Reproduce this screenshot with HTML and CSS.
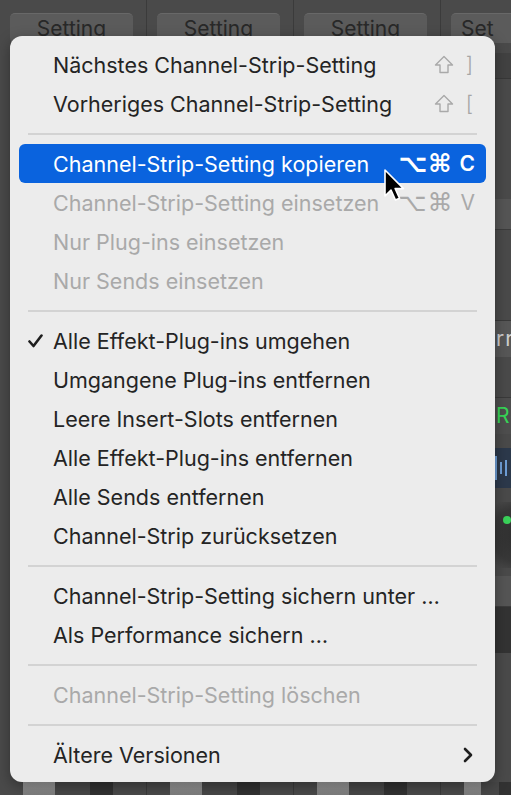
FILE: index.html
```html
<!DOCTYPE html>
<html>
<head>
	<meta charset="UTF-8" />
	<title>Channel-Strip-Menü</title>
	<link rel="stylesheet" href="styles.css">
</head>
<body>
	<div class="mixer">
		<div class="strip">
			<div class="setting-btn">Setting</div>
			<div class="fader-row"><span class="cap"></span><span class="slot"></span><span class="deep"></span></div>
		</div>
		<div class="strip">
			<div class="setting-btn">Setting</div>
			<div class="fader-row"><span class="cap"></span><span class="slot"></span><span class="deep"></span></div>
		</div>
		<div class="strip">
			<div class="setting-btn">Setting</div>
			<div class="fader-row"><span class="cap"></span><span class="slot"></span><span class="deep"></span></div>
		</div>
		<div class="strip last">
			<div class="setting-btn">Set</div>
			<div class="band dark"></div>
			<div class="band gap-a"></div>
			<div class="band mid"></div>
			<div class="band gap-b"></div>
			<div class="band slot-text">rr</div>
			<div class="band gap-c"></div>
			<div class="band slot-text green">Re</div>
			<div class="band gap-d"></div>
			<div class="band wave"><span></span><span></span><span></span><span></span></div>
			<div class="knob"><span class="led"></span></div>
			<div class="band mid"></div>
			<div class="band deep"></div>
			<div class="fader-row"><span class="cap"></span><span class="slot"></span><span class="deep"></span></div>
		</div>
	</div>

	<div class="menu">
		<div class="item"><span class="label">Nächstes Channel-Strip-Setting</span>
			<span class="keys dim"><svg class="shift" width="20" height="19" viewBox="0 0 20 19"><path d="M10 1.5 L18.5 10 L14 10 L14 17.5 L6 17.5 L6 10 L1.5 10 Z" fill="none" stroke="#a9a9a9" stroke-width="1.4" stroke-linejoin="round"/></svg>]</span>
		</div>
		<div class="item"><span class="label">Vorheriges Channel-Strip-Setting</span>
			<span class="keys dim"><svg class="shift" width="20" height="19" viewBox="0 0 20 19"><path d="M10 1.5 L18.5 10 L14 10 L14 17.5 L6 17.5 L6 10 L1.5 10 Z" fill="none" stroke="#a9a9a9" stroke-width="1.4" stroke-linejoin="round"/></svg>[</span>
		</div>
		<div class="sep"></div>
		<div class="item active"><span class="label">Channel-Strip-Setting kopieren</span><span class="keys"><span class="sym">⌥⌘</span>C</span></div>
		<div class="item off"><span class="label">Channel-Strip-Setting einsetzen</span><span class="keys"><span class="sym">⌥⌘</span>V</span></div>
		<div class="item off"><span class="label">Nur Plug-ins einsetzen</span></div>
		<div class="item off"><span class="label">Nur Sends einsetzen</span></div>
		<div class="sep"></div>
		<div class="item">
			<svg class="check" width="15" height="14" viewBox="0 0 15 14"><path d="M1.5 7.5 L5.5 12 L13.5 1.5" fill="none" stroke="#1e1e1e" stroke-width="2.6" stroke-linecap="round" stroke-linejoin="round"/></svg>
			<span class="label">Alle Effekt-Plug-ins umgehen</span>
		</div>
		<div class="item"><span class="label">Umgangene Plug-ins entfernen</span></div>
		<div class="item"><span class="label">Leere Insert-Slots entfernen</span></div>
		<div class="item"><span class="label">Alle Effekt-Plug-ins entfernen</span></div>
		<div class="item"><span class="label">Alle Sends entfernen</span></div>
		<div class="item"><span class="label">Channel-Strip zurücksetzen</span></div>
		<div class="sep"></div>
		<div class="item"><span class="label">Channel-Strip-Setting sichern unter …</span></div>
		<div class="item"><span class="label">Als Performance sichern …</span></div>
		<div class="sep"></div>
		<div class="item off"><span class="label">Channel-Strip-Setting löschen</span></div>
		<div class="sep"></div>
		<div class="item"><span class="label">Ältere Versionen</span>
			<svg class="chevron" width="12" height="16" viewBox="0 0 12 16"><path d="M3 2 L9 8 L3 14" fill="none" stroke="#1e1e1e" stroke-width="2.6" stroke-linecap="round" stroke-linejoin="round"/></svg>
		</div>
	</div>

	<svg class="cursor" width="28" height="36" viewBox="0 0 28 36">
		<path d="M2 1 L2 27 L8 21 L12.5 31 L16.5 29.3 L12.2 19.6 L20.5 19.6 Z" fill="#000" stroke="#fff" stroke-width="1.6" stroke-linejoin="round"/>
	</svg>
</body>
</html>
```

FILE: styles.css
```css
html, body{
	margin: 0;
	padding: 0;
}
body{
	width: 511px;
	height: 795px;
	overflow: hidden;
	position: relative;
	background-color: #4a4a4a;
	font-family: Inter, "Noto Sans", "Liberation Sans", sans-serif;
}

/* mixer behind the menu */
.mixer{
	display: flex;
	height: 795px;
}
.strip{
	width: 147px;
	flex: none;
	display: flex;
	flex-direction: column;
	border-right: 1px solid #3b3b3b;
	padding-top: 13px;
	box-sizing: border-box;
}
.strip.last{
	width: 70px;
	border-right: 0;
}
.setting-btn{
	margin-left: 10px;
	width: 123px;
	height: 30px;
	flex: none;
	box-sizing: border-box;
	border-radius: 5px;
	background: #5b5b5b;
	border-top: 1px solid #686868;
	color: #282828;
	font-size: 21px;
	text-align: center;
	line-height: 30px;
}
.strip.last .setting-btn{
	width: 90px;
	text-align: left;
	padding-left: 10px;
}
.band{
	flex: none;
	margin-left: 10px;
	height: 20px;
}
.band.dark{ height: 25px; margin-top: 10px; background: #424242; border-bottom: 1px solid #383838; }
.band.gap-a{ height: 120px; }
.band.mid{ height: 30px; background: #555555; border-bottom: 1px solid #3c3c3c; }
.band.gap-b{ height: 90px; }
.band.slot-text{
	height: 36px;
	background: #575757;
	color: #cfcfcf;
	font-size: 21px;
	line-height: 36px;
	padding-left: 45px;
	letter-spacing: 1px;
	border-top: 1px solid #3a3a3a;
}
.band.slot-text.green{ color: #37d657; background: #4e4e4e; }
.band.gap-c{ height: 40px; }
.band.gap-d{ height: 14px; }
.band.wave{
	height: 40px;
	background: #2c394b;
	display: flex;
	justify-content: flex-end;
	align-items: center;
	gap: 3px;
	padding-right: 4px;
}
.band.wave span{
	width: 2px;
	height: 16px;
	background: #6f9fd8;
}
.band.wave span:nth-child(2){ height: 24px; }
.band.wave span:nth-child(3){ height: 12px; }
.knob{
	flex: none;
	margin: 14px 0 8px 10px;
	height: 66px;
	position: relative;
	background: radial-gradient(circle at 70px 33px, #2e2e2e 0, #383838 28px, #4a4a4a 40px);
}
.knob .led{
	position: absolute;
	left: 52px;
	top: 14px;
	width: 8px;
	height: 8px;
	border-radius: 50%;
	background: #3ad35a;
}
.band.deep{ height: 46px; background: #333333; }

.fader-row{
	margin-top: auto;
	height: 13px;
	flex: none;
	display: flex;
}
.fader-row .cap{
	margin-left: 23px;
	width: 32px;
	background: linear-gradient(#9a9a9a, #7d7d7d);
}
.fader-row .slot{
	width: 35px;
	background: #474747;
}
.fader-row .deep{
	width: 23px;
	background: #323232;
}

/* popup menu */
.menu{
	position: absolute;
	left: 10px;
	top: 36px;
	width: 485px;
	height: 746px;
	box-sizing: border-box;
	padding: 9px 9px 8px 9px;
	background: #ececec;
	border-radius: 12px;
	box-shadow: 0 4px 14px rgba(0,0,0,0.35);
	color: #242424;
	font-size: 21.5px;
}
.item{
	height: 39px;
	display: flex;
	align-items: center;
	padding: 0 11px 0 34px;
	border-radius: 6px;
	position: relative;
	white-space: nowrap;
}
.item .label{
	flex: 1;
}
.item.active{
	background: #0a63de;
	color: #ffffff;
}
.item.off{
	color: #a9a9a9;
}
.check{
	position: absolute;
	left: 9px;
	top: 13px;
}
.keys{
	font-size: 21px;
	height: 39px;
	display: flex;
	align-items: center;
}
.keys.dim{
	color: #a6a6a6;
	font-weight: 300;
	margin-right: 2px;
}
.keys .shift{
	display: block;
	margin-right: 12px;
	margin-top: -1px;
}
.keys .sym{
	font-family: "DejaVu Sans", sans-serif;
	font-size: 25px;
	line-height: 39px;
	letter-spacing: 1px;
	margin-right: 7px;
}
.item.active .keys{
	font-weight: 600;
}
.chevron{
	display: block;
	margin-right: 1px;
}
.sep{
	height: 21px;
	display: flex;
	align-items: center;
	padding: 0 9px 0 9px;
}
.sep::after{
	content: "";
	flex: 1;
	height: 2px;
	background: #d3d3d3;
}

.cursor{
	position: absolute;
	left: 383px;
	top: 169px;
}
```
